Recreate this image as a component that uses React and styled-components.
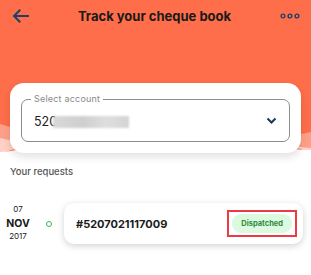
import React from 'react';
import styled, { createGlobalStyle } from 'styled-components';

const Global = createGlobalStyle`
  html, body { margin: 0; padding: 0; background: #ffffff; }
  body { font-family: Inter, "Noto Sans", sans-serif; }
`;

const Page = styled.div`
  width: 311px;
  height: 275px;
  background: #fff;
  overflow: hidden;
  position: relative;
`;

const Header = styled.header`
  position: relative;
  height: 152px;
  background: #fe6e4a;
  padding: 0 10px;
  box-sizing: border-box;
`;

const Toolbar = styled.div`
  position: relative;
  z-index: 2;
  height: 32px;
  display: flex;
  align-items: center;
  justify-content: space-between;
`;

const IconButton = styled.button`
  border: none;
  background: transparent;
  padding: 0;
  width: ${p => p.$w || 20}px;
  height: 20px;
  display: flex;
  align-items: center;
  justify-content: center;
  color: #1f3f66;
`;

const Title = styled.h1`
  margin: 0;
  font-size: 13px;
  font-weight: 700;
  color: #1a1a1a;
`;

const Wave = styled.svg`
  position: absolute;
  left: 0;
  bottom: -12px;
  width: 311px;
  height: 40px;
  z-index: 1;
`;

const AccountCard = styled.div`
  position: relative;
  z-index: 2;
  margin-top: 51px;
  height: 70px;
  background: #fff;
  border-radius: 14px;
  box-shadow: 0 4px 8px rgba(0, 0, 0, 0.12);
  padding: 16px 11px 11px;
  box-sizing: border-box;
`;

const Field = styled.div`
  position: relative;
  height: 43px;
  border: 1px solid #8c8c8c;
  border-radius: 7px;
  box-sizing: border-box;
  display: flex;
  align-items: center;
  justify-content: space-between;
  padding: 0 12px 0 12px;
`;

const FieldLabel = styled.span`
  position: absolute;
  top: -7px;
  left: 9px;
  padding: 0 3px;
  background: #fff;
  font-size: 9px;
  color: #8a8a8a;
  line-height: 12px;
  letter-spacing: 0.2px;
`;

const Value = styled.div`
  display: flex;
  align-items: center;
  font-size: 12.5px;
  color: #222;
  padding-top: 2px;
`;

const Masked = styled.span`
  display: inline-block;
  width: 76px;
  height: 12px;
  margin-left: -4px;
  background: linear-gradient(90deg, #d8d8d8, #cfcfcf 40%, #dedede 70%, #d4d4d4);
  filter: blur(1px);
`;

const Section = styled.section`
  padding: 14px 10px 0;
`;

const SectionTitle = styled.h2`
  margin: 0;
  font-size: 9.5px;
  font-weight: 500;
  color: #555;
`;

const RequestRow = styled.div`
  display: flex;
  align-items: center;
  margin: 26px -2px 0 -3px;
`;

const DateCol = styled.div`
  width: 22px;
  display: flex;
  flex-direction: column;
  align-items: center;
  color: #1a1a1a;
  font-size: 8px;
  line-height: 13.5px;
`;

const Month = styled.span`
  font-size: 10.5px;
  font-weight: 700;
`;

const Dot = styled.span`
  width: 4px;
  height: 4px;
  border: 1px solid #3cba54;
  border-radius: 50%;
  margin: 0 12px 0 17px;
`;

const RequestCard = styled.div`
  flex: 1;
  height: 41px;
  background: #fff;
  border-radius: 10px;
  box-shadow: 0 2px 7px rgba(0, 0, 0, 0.18);
  display: flex;
  align-items: center;
  justify-content: space-between;
  padding: 0 6px 0 12px;
`;

const RequestId = styled.span`
  font-size: 11px;
  font-weight: 700;
  color: #1a1a1a;
`;

const Highlight = styled.div`
  border: 2px solid #ee3a43;
  padding: 2px 3px;
  display: flex;
`;

const Badge = styled.span`
  background: ${p => p.$bg};
  color: ${p => p.$fg};
  font-size: 7.5px;
  font-weight: 700;
  padding: 4.5px 9px;
  border-radius: 9px;
  line-height: 10px;
`;

export default function App() {
  return (
    <Page>
      <Global />
      <Header>
        <Toolbar>
          <IconButton aria-label="back">
            <svg width="17" height="14" viewBox="0 0 17 14" fill="none" stroke="currentColor" strokeWidth="2" strokeLinecap="square">
              <path d="M16 7H2.5M7.5 1.5L2 7l5.5 5.5" />
            </svg>
          </IconButton>
          <Title>Track your cheque book</Title>
          <IconButton aria-label="more" $w={22}>
            <svg width="20" height="6" viewBox="0 0 20 6" fill="none" stroke="currentColor" strokeWidth="1.4">
              <circle cx="3" cy="3" r="1.9" />
              <circle cx="10" cy="3" r="1.9" />
              <circle cx="17" cy="3" r="1.9" />
            </svg>
          </IconButton>
        </Toolbar>
        <Wave viewBox="0 0 311 40" preserveAspectRatio="none">
          <path d="M0 0 C60 18 120 30 180 26 C240 22 280 14 311 8 V40 H0Z" fill="#ffffff" opacity="0.35" />
          <path d="M0 14 C70 30 150 36 200 30 C250 24 290 20 311 24 V40 H0Z" fill="#ffffff" opacity="0.5" />
          <path d="M0 30 L26 22 M292 22 L311 30" stroke="#fe6e4a" strokeWidth="0.8" fill="none" />
          <path d="M0 28 C60 22 120 20 311 26 V40 H0Z" fill="#ffffff" />
        </Wave>
        <AccountCard>
          <Field>
            <FieldLabel>Select account</FieldLabel>
            <Value>520<Masked /></Value>
            <svg width="11" height="7" viewBox="0 0 11 7" fill="none" stroke="#1f3552" strokeWidth="2">
              <path d="M1.5 1.5l4 4 4-4" />
            </svg>
          </Field>
        </AccountCard>
      </Header>
      <Section>
        <SectionTitle>Your requests</SectionTitle>
        <RequestRow>
          <DateCol>
            <span>07</span>
            <Month>NOV</Month>
            <span>2017</span>
          </DateCol>
          <Dot />
          <RequestCard>
            <RequestId>#5207021117009</RequestId>
            <Highlight>
              <Badge $bg="#dcfadf" $fg="#2f8a3c">Dispatched</Badge>
            </Highlight>
          </RequestCard>
        </RequestRow>
      </Section>
    </Page>
  );
}
